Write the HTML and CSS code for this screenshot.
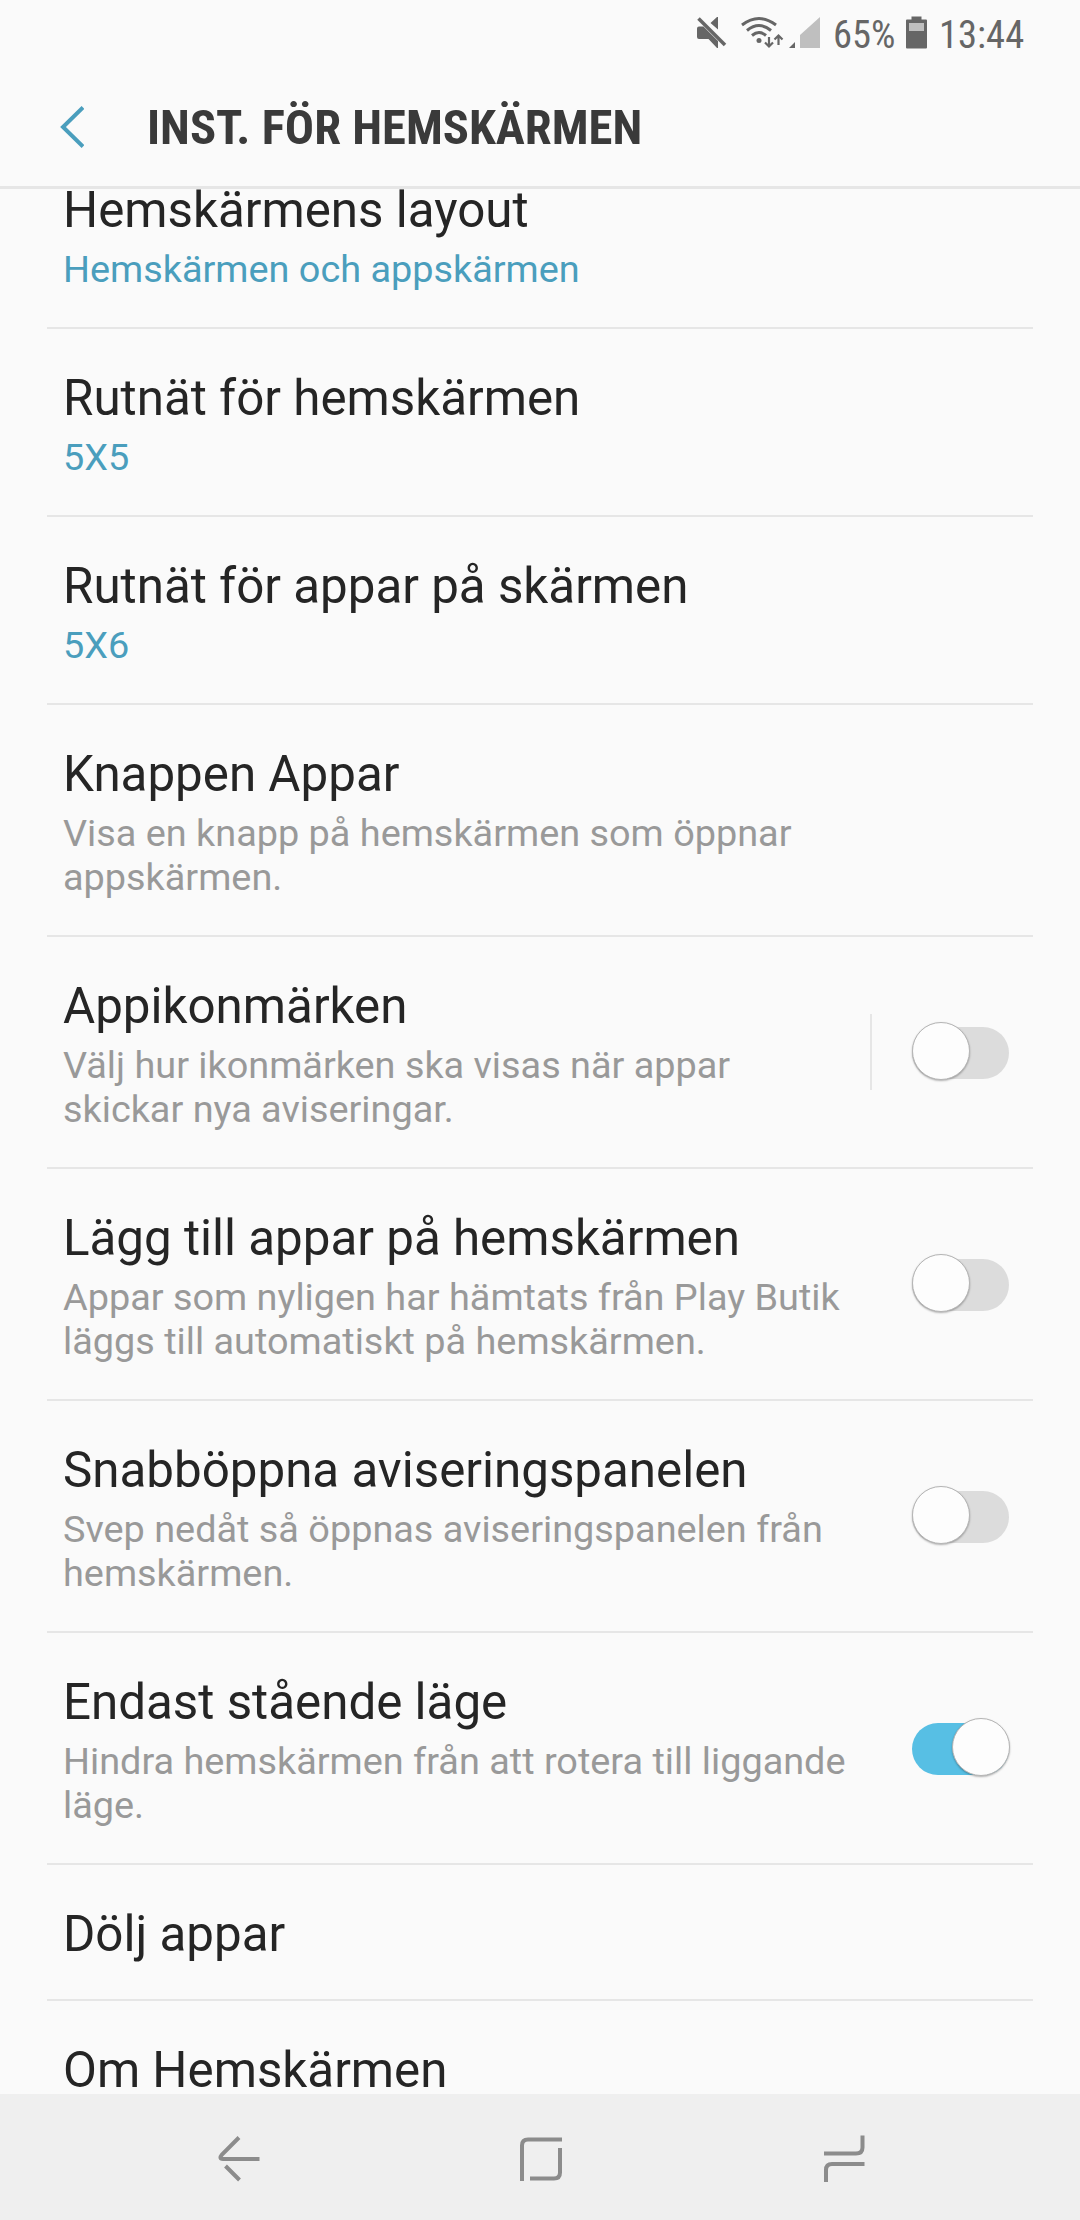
FILE: index.html
```
<!DOCTYPE html>
<html lang="sv">
<head>
    <meta charset="UTF-8">
    <meta name="viewport" content="width=device-width, initial-scale=1.0">
    <title>Inst. för hemskärmen</title>
    <link rel="stylesheet" href="styles.css">
</head>
<body>
    <div class="screen">
        <div class="status-bar">
            <svg class="status-icons" width="130" height="36" viewBox="0 0 130 36">
                <!-- Ljud av -->
                <path fill="#666" d="M2 10.500H6.500L21 25V32H20L11.500 23H2a2 2 0 0 1-2-2v-8.500a2 2 0 0 1 2-2zM13.500 7L20 1H21V13.500z"/>
                <path stroke="#666" stroke-width="3.500" d="M1.500 2.500L28 29"/>
                <!-- Wifi -->
                <g fill="none" stroke="#666" stroke-width="3">
                    <path d="M45 9Q62-4 79 9"/>
                    <path d="M50 14.500Q62 4.500 74 14.500"/>
                    <path d="M55 19.500Q62 13.500 69 19.500"/>
                </g>
                <circle cx="62" cy="24.500" r="2.500" fill="#666"/>
                <path fill="none" stroke="#666" stroke-width="2.200" d="M72 21v9.500M68 26.500l4 4 4-4M81.500 29v-9.500M77.500 23.500l4-4 4 4"/>
                <!-- Signal -->
                <path fill="#666" d="M92 32h6v-6z"/>
                <path fill="#bfbfbf" d="M103 32h20V1L103 19z"/>
            </svg>
            <span class="battery-text">65%</span>
            <svg class="battery-icon" width="21" height="33" viewBox="0 0 21 33">
                <path fill="#666" d="M5.500 0.500h10v3H20a1 1 0 0 1 1 1v27a1 1 0 0 1-1 1H1a1 1 0 0 1-1-1V4.500a1 1 0 0 1 1-1h4.500z"/>
                <path fill="#bfbfbf" d="M3 7h15v8H3z"/>
            </svg>
            <span class="clock">13:44</span>
        </div>

        <div class="header">
            <svg class="back" width="24" height="44" viewBox="0 0 24 44">
                <path fill="none" stroke="#4a9ebd" stroke-width="4" d="M23 2.500L3 22 23 41.500"/>
            </svg>
            <h1>INST. FÖR HEMSKÄRMEN</h1>
        </div>

        <div class="list">
            <div class="row row-first">
                <div class="text">
                    <h2>Hemskärmens layout</h2>
                    <p class="value">Hemskärmen och appskärmen</p>
                </div>
            </div>
            <div class="row">
                <div class="text">
                    <h2>Rutnät för hemskärmen</h2>
                    <p class="value">5X5</p>
                </div>
            </div>
            <div class="row">
                <div class="text">
                    <h2>Rutnät för appar på skärmen</h2>
                    <p class="value">5X6</p>
                </div>
            </div>
            <div class="row">
                <div class="text">
                    <h2>Knappen Appar</h2>
                    <p>Visa en knapp på hemskärmen som öppnar<br>appskärmen.</p>
                </div>
            </div>
            <div class="row">
                <div class="text">
                    <h2>Appikonmärken</h2>
                    <p>Välj hur ikonmärken ska visas när appar<br>skickar nya aviseringar.</p>
                </div>
                <div class="separator"></div>
                <div class="switch"></div>
            </div>
            <div class="row">
                <div class="text">
                    <h2>Lägg till appar på hemskärmen</h2>
                    <p>Appar som nyligen har hämtats från Play Butik<br>läggs till automatiskt på hemskärmen.</p>
                </div>
                <div class="switch"></div>
            </div>
            <div class="row">
                <div class="text">
                    <h2>Snabböppna aviseringspanelen</h2>
                    <p>Svep nedåt så öppnas aviseringspanelen från<br>hemskärmen.</p>
                </div>
                <div class="switch"></div>
            </div>
            <div class="row">
                <div class="text">
                    <h2>Endast stående läge</h2>
                    <p>Hindra hemskärmen från att rotera till liggande<br>läge.</p>
                </div>
                <div class="switch on"></div>
            </div>
            <div class="row row-single">
                <div class="text">
                    <h2>Dölj appar</h2>
                </div>
            </div>
            <div class="row row-single">
                <div class="text">
                    <h2>Om Hemskärmen</h2>
                </div>
            </div>
        </div>

        <div class="nav-bar">
            <svg width="60" height="60" viewBox="0 0 60 60">
                <path d="M29 10.500L12 27.500Q8.500 32 13 32H49.500M15.500 39L29.500 53"/>
            </svg>
            <svg width="60" height="60" viewBox="0 0 60 60">
                <path d="M52 12.500H18Q12 12.500 12 18.500V54M20 51.500H44Q50 51.500 50 45.500V21"/>
            </svg>
            <svg width="60" height="60" viewBox="0 0 60 60">
                <path d="M14 26.500H46Q52.500 26.500 52.500 20.500V8.500M54.500 37H22Q16 37 16 43V55"/>
            </svg>
        </div>
    </div>
</body>
</html>
```

FILE: styles.css
```
:root {
    --bg: #fafafa;
    --line: #e6e6e6;
    --text: #252525;
    --sub: #999;
    --accent: #4a9ebd;
}

* {
    box-sizing: border-box;
}

body {
    margin: 0;
    font-family: Roboto, sans-serif;
    background: var(--bg);
    color: var(--text);
}

h1, h2, p {
    margin: 0;
    font-weight: 400;
}

.screen {
    width: 1080px;
    height: 2220px;
    display: flex;
    flex-direction: column;
    overflow: hidden;
}

.status-bar {
    height: 66px;
    flex: none;
    display: flex;
    align-items: flex-start;
    padding: 16px 0 0 697px;
    color: #666;
    font-size: 38.6px;
    line-height: 38px;
    font-family: "Roboto Condensed", Roboto, sans-serif;
    font-stretch: 75%;
    white-space: nowrap;
}

.battery-text {
    width: 73px;
    margin-left: 6px;
}

.clock {
    margin-left: 12px;
}

.header {
    height: 123px;
    flex: none;
    display: flex;
    border-bottom: 3px solid var(--line);
    padding: 33px 0 0 60px;
}

.back {
    margin-top: 6px;
}

.header h1 {
    margin-left: 63px;
    font-family: "Roboto Condensed", Roboto, sans-serif;
    font-stretch: 75%;
    font-size: 48.6px;
    line-height: 58px;
    font-weight: 700;
    color: #3a3a3a;
    white-space: nowrap;
}

.list {
    height: 1905px;
    flex: none;
    overflow: hidden;
    padding: 0 47px;
}

.row {
    display: flex;
    align-items: center;
    padding: 41px 0 36px 16px;
    border-bottom: 2px solid var(--line);
}

.row-first {
    margin-top: -48px;
}

.text {
    flex: 1;
    white-space: nowrap;
}

.row h2 {
    font-size: 49.3px;
    line-height: 57px;
}

.row p {
    margin-top: 8px;
    font-size: 37.85px;
    line-height: 44px;
    color: var(--sub);
}

.row .value {
    color: var(--accent);
}

.separator {
    width: 2px;
    height: 76px;
    margin: 0 40px 5px 0;
    background: var(--line);
}

.switch {
    width: 97px;
    height: 52px;
    margin: 0 24px 3px 0;
    border-radius: 26px;
    background: #dcdcdc;
    display: flex;
    align-items: center;
}

.switch::before {
    content: "";
    width: 56px;
    height: 56px;
    margin: -4px 0 0 0;
    flex: none;
    border-radius: 50%;
    border: 1px solid #b5b5b5;
    background: #fdfdfd;
    box-shadow: 0 1px 2px rgba(0, 0, 0, 0.3);
}

.switch.on {
    background: #57bfe4;
    justify-content: flex-end;
}

.switch.on::before {
    margin-right: -1px;
}

.nav-bar {
    flex: 1;
    display: flex;
    justify-content: center;
    align-items: center;
    gap: 240px;
    background: #efefef;
}

.nav-bar path {
    fill: none;
    stroke: #8c8c8c;
    stroke-width: 4;
}
```
